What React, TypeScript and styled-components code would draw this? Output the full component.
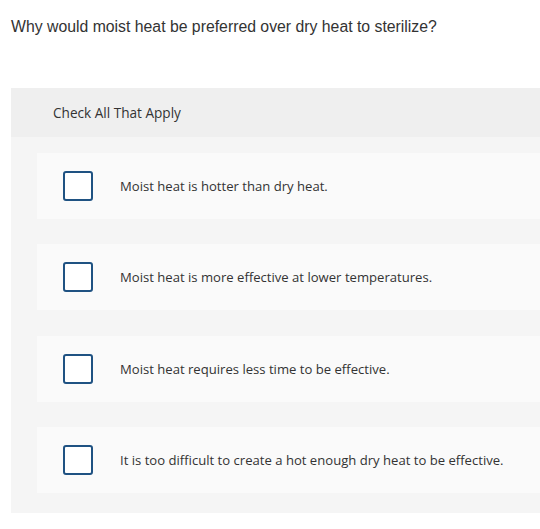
import styled, { createGlobalStyle } from "styled-components";

const GlobalStyle = createGlobalStyle`
  body {
    margin: 0;
    background: #ffffff;
    font-family: "Open Sans", "Liberation Sans", sans-serif;
  }
`;

const Page = styled.div`
  width: 540px;
  height: 529px;
  overflow: hidden;
  padding-top: 15px;
  box-sizing: border-box;
`;

const Question = styled.p`
  margin: 0 0 0 11px;
  font-family: "Liberation Sans", Arial, sans-serif;
  font-size: 15.8px;
  line-height: 23px;
  color: #333333;
`;

const Panel = styled.section`
  margin: 50px 0 0 11px;
  background: #f5f5f5;
  padding-bottom: 20px;
`;

const PanelHeader = styled.div`
  background: #efefef;
  height: 49px;
  display: flex;
  align-items: center;
  padding-left: 42px;
  font-size: 13.6px;
  color: #333333;
`;

const List = styled.div`
  display: flex;
  flex-direction: column;
  gap: 25.4px;
  padding: 16px 0 0 26px;
`;

const Option = styled.label`
  height: 66px;
  background: #fafafa;
  display: flex;
  align-items: center;
  padding-left: 26px;
  gap: 27px;
  font-size: 13.1px;
  color: #333333;
  cursor: pointer;
`;

const Box = styled.span`
  width: 26px;
  height: 26px;
  border: 2px solid #1f5282;
  border-radius: 3px;
  background: #ffffff;
  flex-shrink: 0;
`;

const options = [
  "Moist heat is hotter than dry heat.",
  "Moist heat is more effective at lower temperatures.",
  "Moist heat requires less time to be effective.",
  "It is too difficult to create a hot enough dry heat to be effective.",
];

export default function App() {
  return (
    <Page>
      <GlobalStyle />
      <Question>Why would moist heat be preferred over dry heat to sterilize?</Question>
      <Panel>
        <PanelHeader>Check All That Apply</PanelHeader>
        <List>
          {options.map((o) => (
            <Option key={o}>
              <Box />
              <span>{o}</span>
            </Option>
          ))}
        </List>
      </Panel>
    </Page>
  );
}
